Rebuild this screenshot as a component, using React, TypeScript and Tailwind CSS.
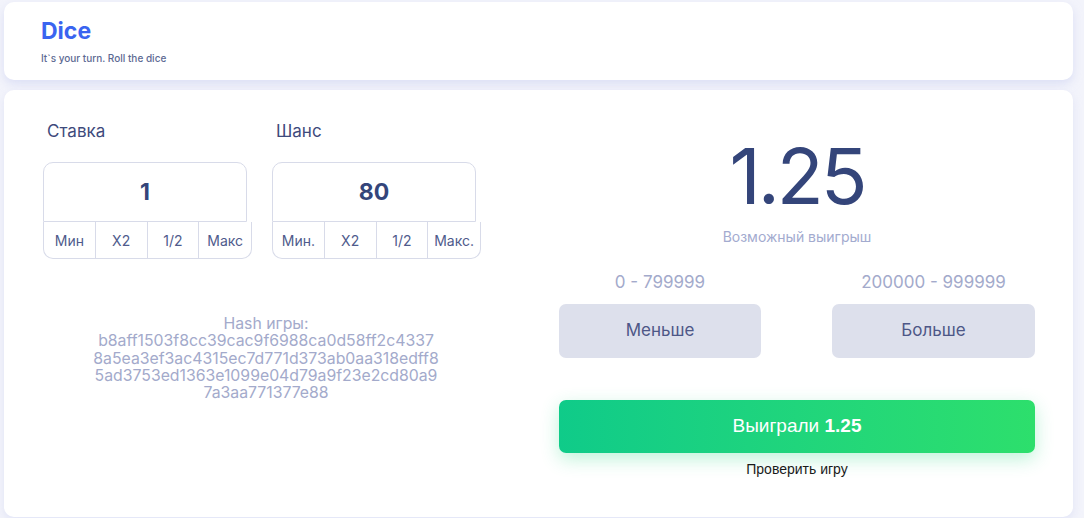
const hashLines = [
  "b8aff1503f8cc39cac9f6988ca0d58ff2c4337",
  "8a5ea3ef3ac4315ec7d771d373ab0aa318edff8",
  "5ad3753ed1363e1099e04d79a9f23e2cd80a9",
  "7a3aa771377e88",
];

const BetBox = ({ label, value, buttons }: { label: string; value: string; buttons: string[] }) => (
  <div className="flex flex-col">
    <div className="pl-1 text-[17px] leading-5 text-[#3e4a7c]">{label}</div>
    <div className="mt-[21px] flex h-[60px] w-[204px] items-center justify-center rounded-t-[10px] border border-[#d8dbe9] text-[23px] font-bold text-[#34457a]">
      {value}
    </div>
    <div className="grid h-[37px] w-[209px] grid-cols-4 rounded-b-[10px] border border-t-0 border-[#d8dbe9]">
      {buttons.map((b, i) => (
        <div
          key={b}
          className={`flex items-center justify-center text-[14px] text-[#4f5b8c] ${i < 3 ? "border-r border-[#d8dbe9]" : ""}`}
        >
          {b}
        </div>
      ))}
    </div>
  </div>
);

const App = () => {
  return (
    <div className="min-h-screen bg-[#f3f4fb] pt-[2px] font-['Inter',sans-serif]">
      {/* Header */}
      <div className="ml-[4px] h-[78px] w-[1069px] rounded-[10px] bg-white pl-[37px] pt-[15px] shadow-[0_4px_10px_rgba(200,206,240,0.55)]">
        <h1 className="text-[23px] font-bold leading-7 text-[#3a64f0]">Dice</h1>
        <p className="mt-[7px] text-[10px] font-medium leading-3 text-[#5d6a93]">It`s your turn. Roll the dice</p>
      </div>

      {/* Main */}
      <div className="ml-[4px] mt-[10px] flex h-[427px] w-[1069px] rounded-[10px] bg-white pl-[39px] shadow-[0_4px_10px_rgba(200,206,240,0.4)]">
        <div className="flex w-[433px] flex-col pt-[31px]">
          <div className="flex gap-[20px]">
            <BetBox label="Ставка" value="1" buttons={["Мин", "X2", "1/2", "Макс"]} />
            <BetBox label="Шанс" value="80" buttons={["Мин.", "X2", "1/2", "Макс."]} />
          </div>
          <div className="mt-[56px] flex flex-col items-center pl-[13px] text-[15.8px] leading-[17.3px] text-[#a3aacb]">
            <span>Hash игры:</span>
            {hashLines.map((l) => (
              <span key={l}>{l}</span>
            ))}
          </div>
        </div>

        <div className="ml-[83px] flex w-[476px] flex-col items-center pt-[47px]">
          <div className="text-[77px] leading-[78px] tracking-[-0.04em] text-[#34457a]">1.25</div>
          <div className="mt-[14px] text-[14px] leading-4 text-[#a3abcf]">Возможный выигрыш</div>
          <div className="mt-[27px] flex w-full justify-between">
            <div className="flex w-[202px] flex-col items-center">
              <span className="text-[17px] leading-5 text-[#a3aacb]">0 - 799999</span>
              <button className="mt-[12px] flex h-[54px] w-full items-center justify-center rounded-[7px] bg-[#dde0ec] text-[17px] text-[#4d5787]">
                Меньше
              </button>
            </div>
            <div className="flex w-[203px] flex-col items-center">
              <span className="text-[17px] leading-5 text-[#a3aacb]">200000 - 999999</span>
              <button className="mt-[12px] flex h-[54px] w-full items-center justify-center rounded-[7px] bg-[#dde0ec] text-[17px] text-[#4d5787]">
                Больше
              </button>
            </div>
          </div>
          <button className="mt-[42px] flex h-[53px] w-full items-center justify-center rounded-[7px] bg-gradient-to-r from-[#0fcb89] to-[#2ddf6c] font-['Liberation_Sans',Arial,sans-serif] text-[19px] text-white shadow-[0_6px_18px_rgba(40,214,130,0.3)]">
            Выиграли&nbsp;<b>1.25</b>
          </button>
          <div className="mt-[8px] font-['Liberation_Sans',Arial,sans-serif] text-[14px] leading-4 text-[#1a1a1a]">
            Проверить игру
          </div>
        </div>
      </div>
    </div>
  );
};

export default App;
